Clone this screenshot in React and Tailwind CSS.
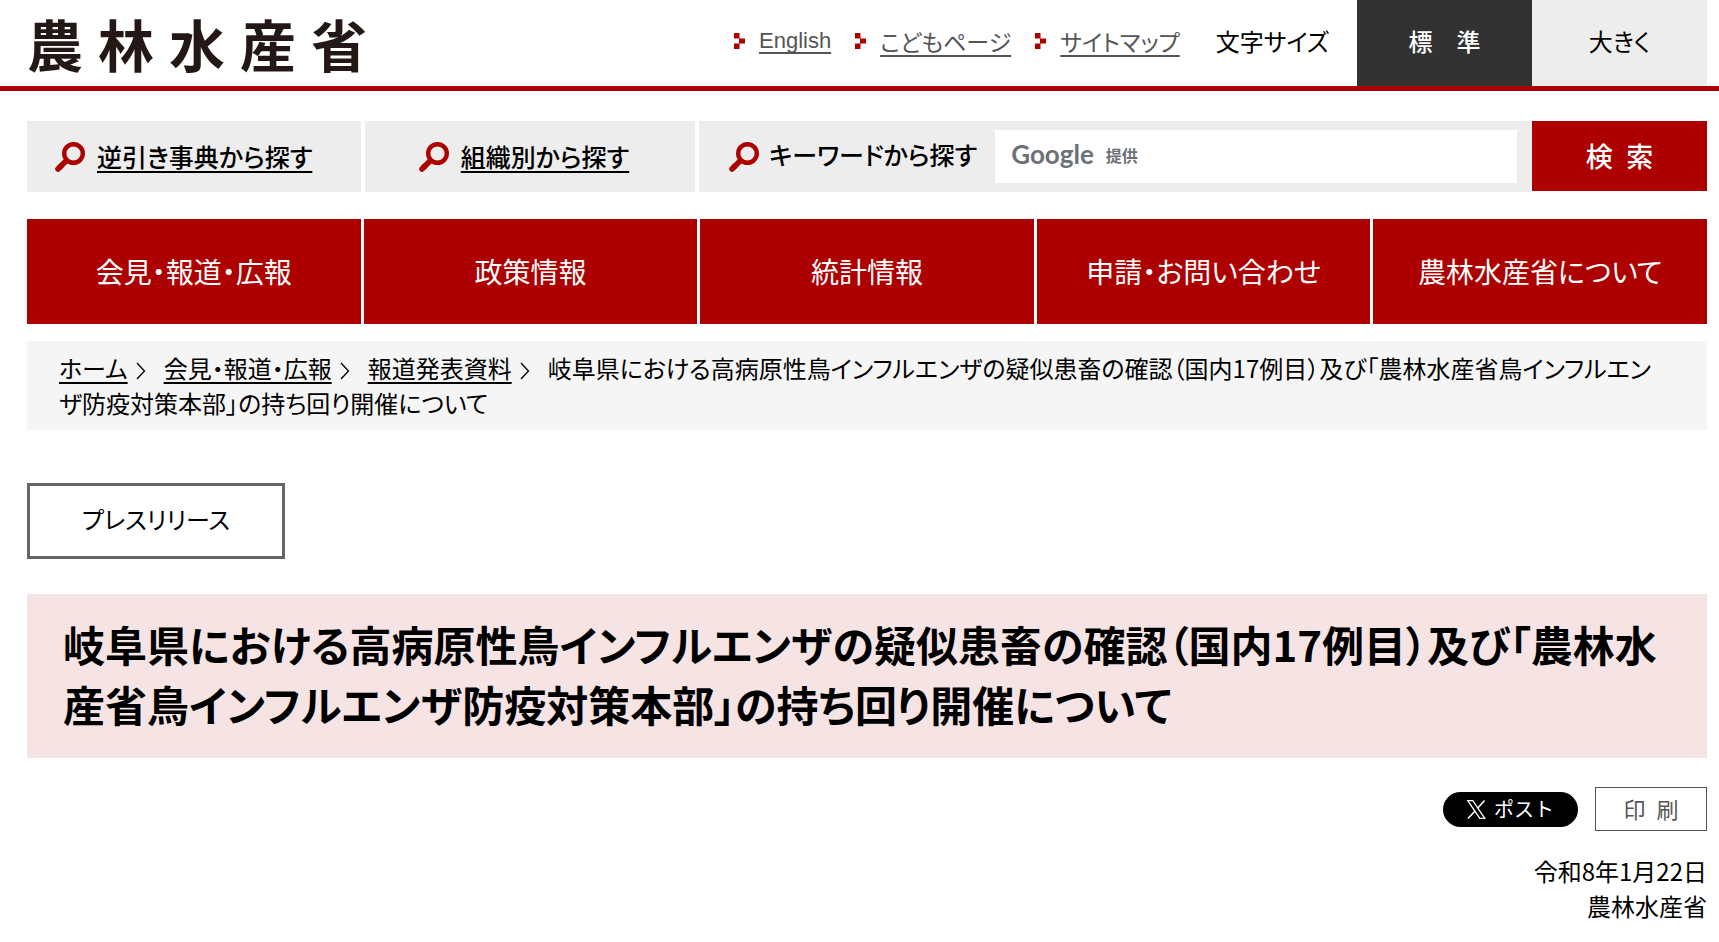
const NAV_ITEMS = [
  "会見・報道・広報",
  "政策情報",
  "統計情報",
  "申請・お問い合わせ",
  "農林水産省について",
];

const HEADER_LINKS = ["こどもページ", "サイトマップ"];

const BREADCRUMBS = ["ホーム", "会見・報道・広報", "報道発表資料"];

const TITLE =
  "岐阜県における高病原性鳥インフルエンザの疑似患畜の確認（国内17例目）及び「農林水産省鳥インフルエンザ防疫対策本部」の持ち回り開催について";

const SearchIcon = () => (
  <svg className="w-[30px] h-[30px] shrink-0" viewBox="0 0 30 30" fill="none" stroke="#ad0000">
    <circle cx="18.500" cy="11.500" r="9.300" strokeWidth="4.400" />
    <path d="M12 18 4 26" strokeWidth="5.500" />
    <path d="M6 24 3 27" strokeWidth="5.500" strokeLinecap="round" />
  </svg>
);

const LinkArrow = () => (
  <svg className="w-[11px] h-4 shrink-0" viewBox="0 0 11 16" fill="#ad0000">
    <path d="M0 0h5.500v5.500H0zM5 5.500H11v5H5zM0 10.500h5.500V16H0z" />
  </svg>
);

const XLogo = () => (
  <svg className="w-[19px] h-[19px] shrink-0" viewBox="0 0 19 19" fill="none" stroke="#fff">
    <path d="M.8.700h5l12 17.600h-5z" strokeWidth="1.300" />
    <path d="M17.600.500 10.600 8.200M8.300 10.700.900 18.600" strokeWidth="1.500" />
  </svg>
);

const Header = () => (
  <header className="flex items-center justify-between border-b-5 border-[#ad0000] pl-[27px] pr-3">
    <h1 className="flex gap-[15px] text-[56px] leading-none font-bold text-[#231815]">
      <span>農</span>
      <span>林</span>
      <span>水</span>
      <span>産</span>
      <span>省</span>
    </h1>
    <div className="flex items-center">
      <ul className="flex gap-6 pb-1 text-[23px]">
        <li className="flex items-center gap-[14px]">
          <LinkArrow />
          <a
            href="#"
            className="font-['Liberation_Sans',sans-serif] text-[22px] text-[#555] underline underline-offset-4 decoration-2"
          >
            English
          </a>
        </li>
        {HEADER_LINKS.map((label) => (
          <li key={label} className="flex items-center gap-[14px]">
            <LinkArrow />
            <a href="#" className="text-[#555] underline underline-offset-4 decoration-2">
              {label}
            </a>
          </li>
        ))}
      </ul>
      <p className="pl-9 pr-7 pb-1">文字サイズ</p>
      <button className="w-[175px] h-[86px] pb-1 bg-[#323232] text-white font-medium">標　準</button>
      <button className="w-[175px] h-[86px] pb-1 bg-[#ededed]">大きく</button>
    </div>
  </header>
);

const SearchBar = () => (
  <div className="flex gap-1 mt-[30px] text-[25px]">
    <div className="flex items-center gap-3 w-[334px] bg-[#ededed] px-7">
      <SearchIcon />
      <a href="#" className="font-medium underline underline-offset-4 decoration-2">
        逆引き事典から探す
      </a>
    </div>
    <div className="flex items-center justify-center gap-3 w-[330px] bg-[#ededed] pr-3">
      <SearchIcon />
      <a href="#" className="font-medium underline underline-offset-4 decoration-2">
        組織別から探す
      </a>
    </div>
    <form className="flex flex-1">
      <div className="flex flex-1 items-center bg-[#ededed] h-[71px] pl-[30px] pr-[15px]">
        <SearchIcon />
        <label htmlFor="keyword" className="ml-[10px] mr-[18px] pb-1 font-medium">
          キーワードから探す
        </label>
        <div className="relative flex-1">
          <input id="keyword" type="text" className="block w-full h-[53px] bg-white px-4" />
          <div className="absolute inset-y-0 left-4 flex items-center gap-3 pb-1 text-[#6b7177] pointer-events-none">
            <span className="font-['Lato',sans-serif] text-[26px] font-bold">Google</span>
            <span className="text-base font-bold">提供</span>
          </div>
        </div>
      </div>
      <button type="button" className="w-[175px] h-[70px] bg-[#ad0000] text-[27px] font-medium text-white">
        検&ensp;索
      </button>
    </form>
  </div>
);

const App = () => {
  return (
    <div className="min-h-screen bg-white font-['Noto_Sans_CJK_JP',sans-serif] [font-feature-settings:'palt'] text-2xl text-black">
      <Header />
      <main className="pl-[27px] pr-3">
        <SearchBar />

        {/* Global navigation */}
        <nav className="grid grid-cols-5 gap-[3px] mt-[27px]">
          {NAV_ITEMS.map((item) => (
            <a
              key={item}
              href="#"
              className="flex items-center justify-center h-[105px] bg-[#ad0000] text-[28px] text-white"
            >
              {item}
            </a>
          ))}
        </nav>

        {/* Breadcrumb */}
        <div className="mt-[17px] bg-[#f5f5f5] pl-8 pr-11 pt-[9px] pb-[10px] leading-[35px]">
          {BREADCRUMBS.map((item) => (
            <span key={item}>
              <a href="#" className="underline underline-offset-4 decoration-2">
                {item}
              </a>
              <svg className="inline-block w-[10px] h-[18px] ml-2 mr-[18px] align-[-2px]" viewBox="0 0 10 18" fill="none">
                <path d="M1 1l7.500 8L1 17" stroke="#000" strokeWidth="1.300" />
              </svg>
            </span>
          ))}
          {TITLE}
        </div>

        <p className="inline-flex items-center justify-center mt-[53px] h-[76px] px-[52px] pb-1 border-3 border-[#666]">
          プレスリリース
        </p>

        <h2 className="mt-[35px] bg-[#f6e4e4] px-9 pt-5 pb-6 text-[42px] leading-[60px] font-bold">
          {TITLE}
        </h2>

        {/* Share and print */}
        <div className="flex items-center justify-end gap-[17px] mt-[29px]">
          <a
            href="#"
            className="flex items-center gap-2 h-[35px] rounded-full bg-black px-6 text-xl text-white [font-feature-settings:normal]"
          >
            <XLogo />
            ポスト
          </a>
          <button className="w-[112px] h-11 border border-[#555] text-[22px] text-[#555]">印&ensp;刷</button>
        </div>

        <div className="mt-[22px] text-right leading-[35px]">
          <p>令和8年1月22日</p>
          <p>農林水産省</p>
        </div>
      </main>
    </div>
  );
};

export default App;
